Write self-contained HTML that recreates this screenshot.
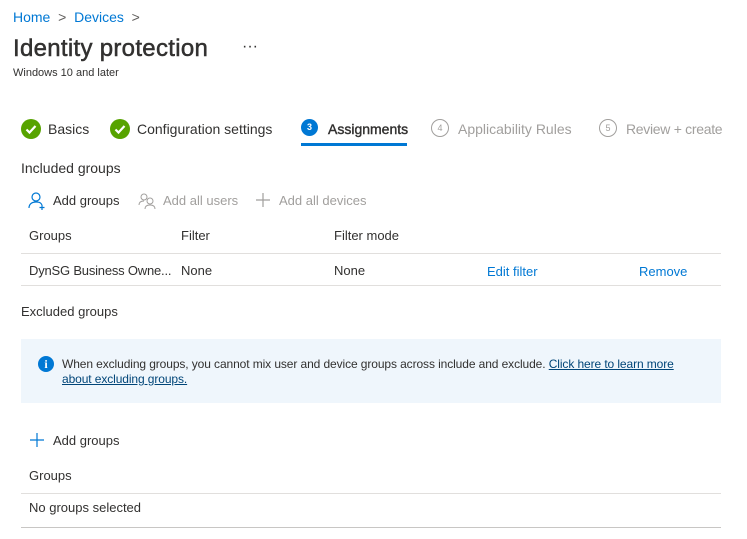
<!DOCTYPE html>
<html><head><style>
body{margin:0;width:747px;height:539px;background:#fff;font-family:"Liberation Sans",sans-serif;color:#323130;position:relative;overflow:hidden;font-size:13px}
.a{position:absolute;white-space:nowrap}
.link{color:#0078d4}
.gray{color:#a19f9d}
.line{position:absolute;left:21px;width:700px;height:1px;background:#e1dfdd}
.chk{position:absolute;width:20px;height:20px;border-radius:50%;background:#57a300}
.num{position:absolute;width:16px;height:16px;border-radius:50%;border:1px solid #a19f9d;color:#a19f9d;font-size:9px;text-align:center;line-height:16px}
</style></head><body>
<div class="a" style="left:13px;top:9px;font-size:14px"><span class="link">Home</span> <span style="color:#605e5c">&nbsp;&gt;&nbsp;</span> <span class="link">Devices</span> <span style="color:#605e5c">&nbsp;&gt;</span></div>
<div class="a" style="left:13px;top:35px;font-size:24px;color:#323130;-webkit-text-stroke:0.5px #323130;letter-spacing:0.3px">Identity protection</div>
<div class="a" style="left:242px;top:38px;font-size:16px">···</div>
<div class="a" style="left:13px;top:67px;font-size:11px">Windows 10 and later</div>

<div class="chk" style="left:21px;top:119px"><svg width="20" height="20"><path d="M5.5 10.5l3 3 6-6.5" stroke="#fff" stroke-width="2.2" fill="none"/></svg></div>
<div class="a" style="left:48px;top:121px;font-size:14px">Basics</div>
<div class="chk" style="left:110px;top:119px"><svg width="20" height="20"><path d="M5.5 10.5l3 3 6-6.5" stroke="#fff" stroke-width="2.2" fill="none"/></svg></div>
<div class="a" style="left:137px;top:121px;font-size:14px">Configuration settings</div>
<div class="a" style="left:301px;top:119px;width:17px;height:17px;border-radius:50%;background:#0078d4;color:#fff;font-size:9px;text-align:center;line-height:17px;font-weight:bold">3</div>
<div class="a" style="left:328px;top:121px;font-size:14px;-webkit-text-stroke:0.4px #323130">Assignments</div>
<div class="a" style="left:301px;top:143px;width:106px;height:3px;background:#0078d4"></div>
<div class="num" style="left:431px;top:119px">4</div>
<div class="a gray" style="left:458px;top:121px;font-size:14px">Applicability Rules</div>
<div class="num" style="left:599px;top:119px">5</div>
<div class="a gray" style="left:626px;top:121px;font-size:14px;letter-spacing:-0.3px">Review + create</div>

<div class="a" style="left:21px;top:160px;font-size:14px">Included groups</div>
<svg class="a" style="left:28px;top:192px" width="20" height="18"><circle cx="8" cy="5" r="4" stroke="#0078d4" fill="none" stroke-width="1.2"/><path d="M1 16c0-4 3-6 7-6s5 1 6 3M14 13v5M11.5 15.5h5" stroke="#0078d4" fill="none" stroke-width="1.2"/></svg>
<div class="a" style="left:53px;top:193px;font-size:13px">Add groups</div>
<svg class="a" style="left:138px;top:192px" width="20" height="18"><circle cx="6" cy="5" r="3" stroke="#a19f9d" fill="none"/><circle cx="12" cy="9" r="3" stroke="#a19f9d" fill="none"/><path d="M1 13c0-3 2-4 5-4M7 17c0-3 2-4 5-4s5 1 5 4" stroke="#a19f9d" fill="none"/></svg>
<div class="a gray" style="left:163px;top:193px">Add all users</div>
<svg class="a" style="left:255px;top:192px" width="16" height="16"><path d="M8 1v14M1 8h14" stroke="#a19f9d" stroke-width="1.2"/></svg>
<div class="a gray" style="left:279px;top:193px">Add all devices</div>

<div class="a" style="left:29px;top:228px">Groups</div>
<div class="a" style="left:181px;top:228px">Filter</div>
<div class="a" style="left:334px;top:228px">Filter mode</div>
<div class="line" style="top:253px"></div>
<div class="a" style="left:29px;top:263px;letter-spacing:-0.2px">DynSG Business Owne...</div>
<div class="a" style="left:181px;top:263px">None</div>
<div class="a" style="left:334px;top:263px">None</div>
<div class="a link" style="left:487px;top:264px">Edit filter</div>
<div class="a link" style="left:639px;top:264px">Remove</div>
<div class="line" style="top:285px"></div>

<div class="a" style="left:21px;top:304px">Excluded groups</div>
<div class="a" style="left:21px;top:339px;width:700px;height:64px;background:#eff6fc"></div>
<div class="a" style="left:38px;top:356px;width:16px;height:16px;border-radius:50%;background:#0078d4;color:#fff;font-size:12px;font-weight:bold;text-align:center;line-height:16px;font-family:'Liberation Serif',serif">i</div>
<div class="a" style="left:62px;top:357px;font-size:12px;line-height:15px;letter-spacing:-0.1px">When excluding groups, you cannot mix user and device groups across include and exclude. <span style="color:#004578;text-decoration:underline">Click here to learn more</span><br><span style="color:#004578;text-decoration:underline">about excluding groups.</span></div>

<svg class="a" style="left:29px;top:432px" width="16" height="16"><path d="M8 1v14M1 8h14" stroke="#0078d4" stroke-width="1.2"/></svg>
<div class="a" style="left:53px;top:433px">Add groups</div>
<div class="a" style="left:29px;top:468px">Groups</div>
<div class="line" style="top:493px"></div>
<div class="a" style="left:29px;top:500px">No groups selected</div>
<div class="line" style="top:527px;background:#c8c6c4"></div>
</body></html>
